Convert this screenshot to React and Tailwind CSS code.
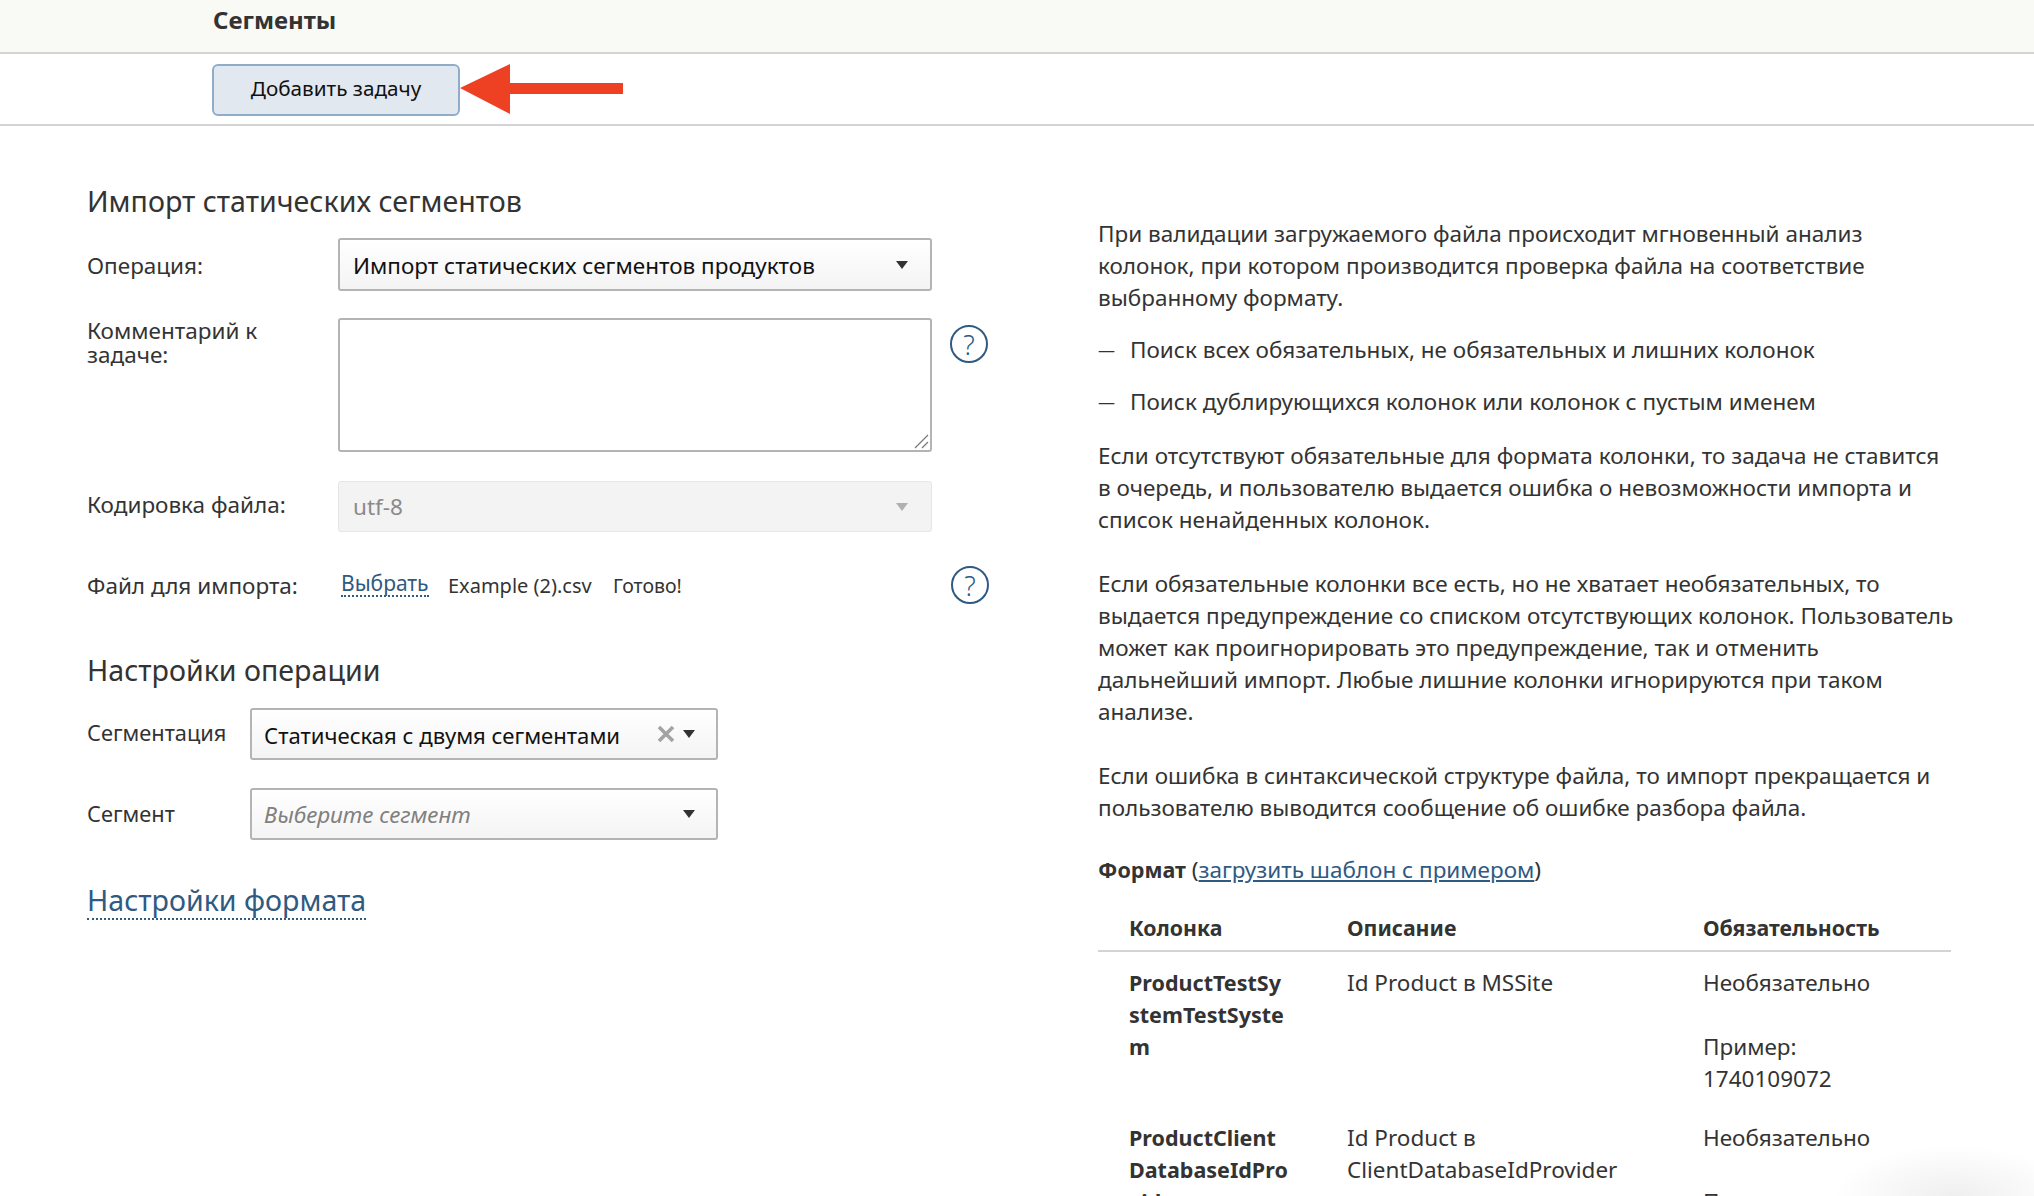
const fontStack = { fontFamily: '"Noto Sans", Roboto, sans-serif' };

const Caret = ({ muted }) => (
  <svg width="12" height="8" viewBox="0 0 12 8" className="shrink-0">
    <path d="M0 0h12L6 8z" fill={muted ? "#b0b0b0" : "#333333"} />
  </svg>
);

const HelpIcon = () => (
  <div className="w-[38px] h-[38px] rounded-full border-2 border-[#2f5a82] flex items-center justify-center text-[27px] font-light leading-none text-[#2f5a82] shrink-0">
    ?
  </div>
);

const Select = ({ children, className = "", clear }) => (
  <div
    className={`flex items-center justify-between rounded-[3px] border-2 border-[#b4b4b8] bg-gradient-to-b from-white to-[#f4f4f4] text-[#111] ${className}`}
  >
    <span className="pt-[2px]">{children}</span>
    <div className="flex items-center gap-[8px]">
      {clear && (
        <svg width="18" height="18" viewBox="0 0 18 18">
          <path d="M2 2l14 14M16 2L2 16" stroke="#a3a3a3" strokeWidth="3.6" />
        </svg>
      )}
      <Caret />
    </div>
  </div>
);

const Row = ({ label, children, className = "", labelClass = "w-[251px]" }) => (
  <div className={`flex items-center ${className}`}>
    <div className={`shrink-0 ${labelClass}`}>{label}</div>
    {children}
  </div>
);

export default function App() {
  return (
    <div style={fontStack} className="h-[1196px] w-[2034px] overflow-hidden bg-white text-[22.5px] leading-[32px] text-[#333] relative">
      <header className="h-[54px] bg-[#f9f9f5] border-b-2 border-[#d4d4d4] pl-[213px] pt-[3px]">
        <h1 className="text-[24px] font-bold leading-[34px] text-[#333]">Сегменты</h1>
      </header>
      <div className="h-[72px] border-b-2 border-[#d4d4d4] pl-[212px] pt-[10px] flex items-start">
        <button className="w-[248px] h-[52px] rounded-[6px] border-2 border-[#8fadc8] bg-[#e2e8f0] text-[20.7px] leading-[44px] text-[#111] pb-[5px]">
          Добавить задачу
        </button>
        <svg width="163" height="52" viewBox="0 0 163 52" className="shrink-0">
          <path d="M0 24L50 0V19H163V30H50V50z" fill="#ee4023" />
        </svg>
      </div>

      <div className="flex">
        {/* форма импорта */}
        <div className="w-[1011px] shrink-0 pl-[87px] pt-[53px]">
          <h2 className="text-[28.6px] leading-[44px] text-[#333]">Импорт статических сегментов</h2>
          <Row label={<span className="block pt-[2px]">Операция:</span>} className="mt-[15px]">
            <Select className="w-[594px] h-[53px] pl-[13px] pr-[22px]">Импорт статических сегментов продуктов</Select>
          </Row>
          <div className="flex items-start mt-[27px]">
            <div className="w-[251px] shrink-0 leading-[24px] pt-[1px]">
              Комментарий к<br />задаче:
            </div>
            <div className="w-[594px] h-[134px] rounded-[3px] border-2 border-[#b4b4b8] relative shrink-0">
              <svg width="16" height="16" viewBox="0 0 16 16" className="absolute right-[1px] bottom-[1px]">
                <path d="M2 15L15 2M9 15l6-6" stroke="#777" strokeWidth="1.2" />
              </svg>
            </div>
            <div className="ml-[18px] mt-[7px]">
              <HelpIcon />
            </div>
          </div>
          <Row label={<span className="block -mt-[3px]">Кодировка файла:</span>} className="mt-[29px]">
            <div className="w-[594px] h-[51px] rounded-[3px] border border-[#e6e6e6] bg-[#f3f3f3] text-[#8a8a8a] flex items-center justify-between pl-[14px] pr-[23px]">
              <span className="pt-[1px]">utf-8</span>
              <Caret muted />
            </div>
          </Row>
          <div className="flex items-center mt-[34px] h-[38px]">
            <div className="w-[254px] shrink-0 pt-[1px]">Файл для импорта:</div>
            <span className="w-[107px] shrink-0 -mt-[4px] text-[21px]">
              <span className="inline-block leading-[24px] text-[#2f5a82] border-b-2 border-dotted border-[#2f5a82]">Выбрать</span>
            </span>
            <span className="w-[165px] shrink-0 text-[20px] pt-[1px]">Example (2).csv</span>
            <span className="w-[338px] shrink-0 text-[19.5px] pt-[1px]">Готово!</span>
            <HelpIcon />
          </div>
          <h2 className="text-[28.6px] leading-[44px] text-[#333] mt-[44px]">Настройки операции</h2>
          <Row label="Сегментация" labelClass="w-[163px] -mt-[3px] text-[21.8px]" className="mt-[16px]">
            <Select clear className="w-[468px] h-[52px] pl-[12px] pr-[21px] text-[22.1px]">Статическая с двумя сегментами</Select>
          </Row>
          <Row label="Сегмент" labelClass="w-[163px] -mt-[1px] text-[21.8px]" className="mt-[28px]">
            <Select className="w-[468px] h-[52px] pl-[12px] pr-[21px]">
              <span className="italic text-[#808080]">Выберите сегмент</span>
            </Select>
          </Row>
          <div className="mt-[42px]">
            <span className="text-[28.6px] leading-[36px] text-[#2f5a82] border-b-2 border-dotted border-[#2f5a82] inline-block">
              Настройки формата
            </span>
          </div>
        </div>

        {/* описание формата */}
        <div className="w-[853px] ml-[87px] shrink-0 pt-[92px] whitespace-nowrap">
          <p>
            При валидации загружаемого файла происходит мгновенный анализ<br />
            колонок, при котором производится проверка файла на соответствие<br />
            выбранному формату.
          </p>
          <div className="flex mt-[20px]">
            <span className="w-[32px] text-[17px]">—</span>
            <span>Поиск всех обязательных, не обязательных и лишних колонок</span>
          </div>
          <div className="flex mt-[20px]">
            <span className="w-[32px] text-[17px]">—</span>
            <span>Поиск дублирующихся колонок или колонок с пустым именем</span>
          </div>
          <p className="mt-[22px]">
            Если отсутствуют обязательные для формата колонки, то задача не ставится<br />
            в очередь, и пользователю выдается ошибка о невозможности импорта и<br />
            список ненайденных колонок.
          </p>
          <p className="mt-[32px]">
            Если обязательные колонки все есть, но не хватает необязательных, то<br />
            выдается предупреждение со списком отсутствующих колонок. Пользователь<br />
            может как проигнорировать это предупреждение, так и отменить<br />
            дальнейший импорт. Любые лишние колонки игнорируются при таком<br />
            анализе.
          </p>
          <p className="mt-[32px]">
            Если ошибка в синтаксической структуре файла, то импорт прекращается и<br />
            пользователю выводится сообщение об ошибке разбора файла.
          </p>
          <p className="mt-[30px]">
            <b className="text-[21.5px]">Формат</b> (<span className="text-[#2f5a82] underline">загрузить шаблон с примером</span>)
          </p>
          <table className="w-[853px] mt-[26px] border-collapse table-fixed">
            <thead>
              <tr className="border-b-2 border-[#d4d4d4] font-bold text-left text-[21.3px]">
                <th className="w-[218px] p-0 pb-[6px] pl-[31px] box-content">Колонка</th>
                <th className="w-[356px] p-0 pb-[6px]">Описание</th>
                <th className="p-0 pb-[6px]">Обязательность</th>
              </tr>
            </thead>
            <tbody>
              <tr>
                <td className="align-top p-0 pl-[31px] pt-[15px] font-bold text-[21.5px]">
                  ProductTestSy<br />stemTestSyste<br />m
                </td>
                <td className="align-top p-0 pt-[15px]">Id Product в MSSite</td>
                <td className="align-top p-0 pt-[15px]">
                  Необязательно
                  <div className="mt-[32px]">Пример:<br />1740109072</div>
                </td>
              </tr>
              <tr>
                <td className="align-top p-0 pl-[31px] pt-[27px] font-bold text-[21.5px]">
                  ProductClient<br />DatabaseIdPro<br />vider
                </td>
                <td className="align-top p-0 pt-[27px]">Id Product в<br />ClientDatabaseIdProvider</td>
                <td className="align-top p-0 pt-[27px]">
                  Необязательно
                  <div className="mt-[32px]">Пример:</div>
                </td>
              </tr>
            </tbody>
          </table>
        </div>
      </div>

      {/* мягкая тень в правом нижнем углу */}
      <div className="absolute right-[-40px] bottom-[-50px] w-[240px] h-[100px] rounded-full bg-[radial-gradient(closest-side,#efefef,#ffffff00)] pointer-events-none" />
    </div>
  );
}
